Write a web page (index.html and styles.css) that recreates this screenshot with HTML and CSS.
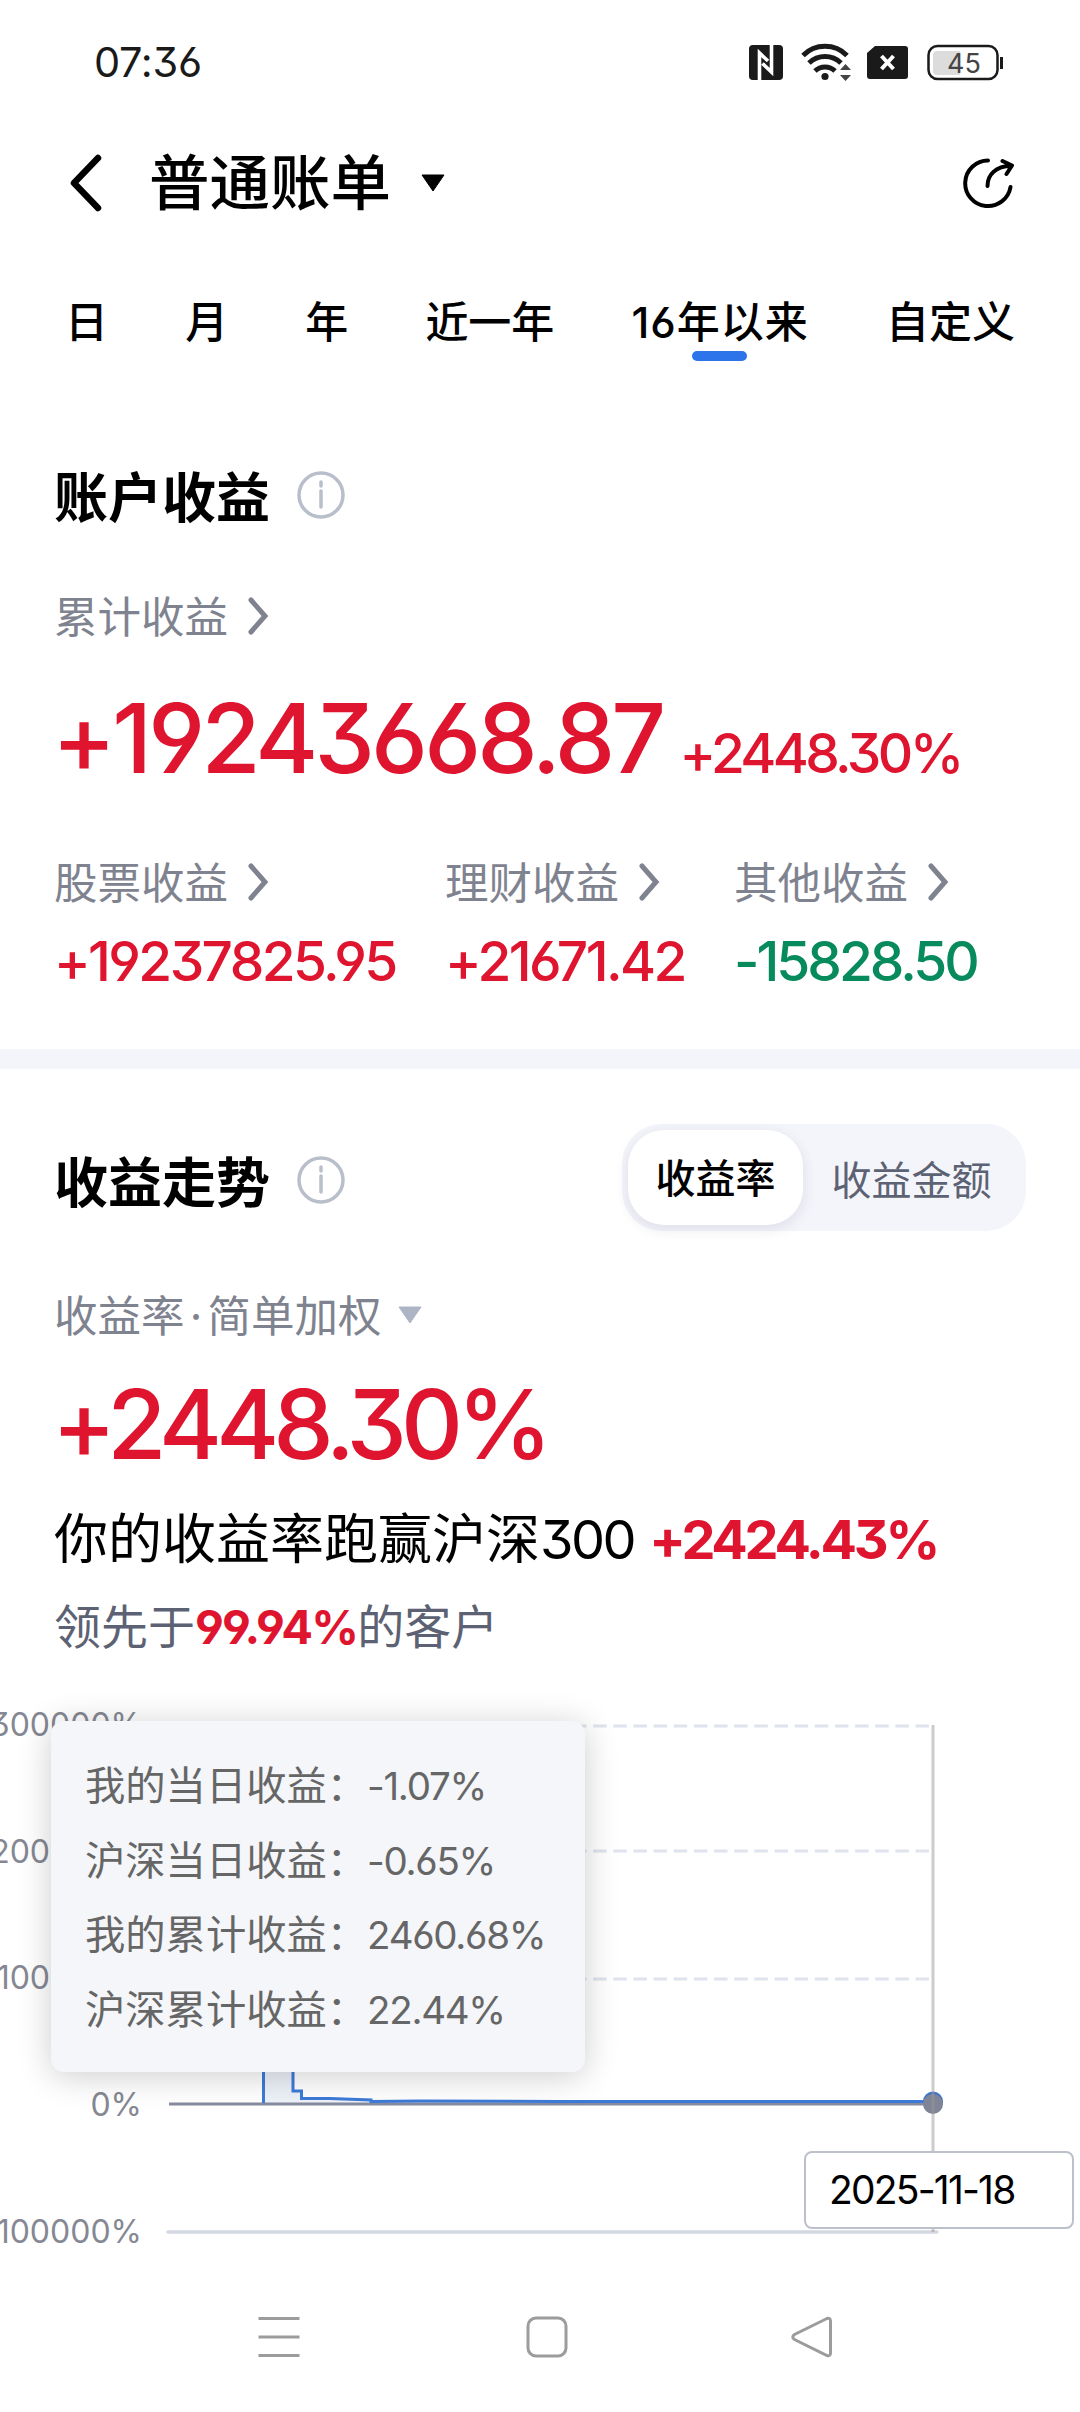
FILE: index.html
```html
<!DOCTYPE html>
<html lang="zh-CN">
<head>
  <meta charset="UTF-8">
  <meta name="viewport" content="width=device-width, initial-scale=1.0">
  <title>普通账单</title>
  <link rel="stylesheet" href="styles.css">
</head>

<body>
  <div class="status-bar">
    <span class="time">07:36</span>
    <svg class="status-icons" width="256" height="42" viewBox="0 0 256 42">
      <!-- nfc -->
      <rect x="1" y="4" width="34" height="35" rx="4" fill="#1a1a1a"/>
      <path d="M11.5 39V12L20 20M23.500 4V31L14.500 22.500" fill="none" stroke="#fff" stroke-width="3.600"/>
      <!-- wifi -->
      <g fill="none" stroke="#1a1a1a" stroke-width="5">
        <path d="M55 14.500A31 31 0 0 1 99 14.500"/>
        <path d="M61 22A23 23 0 0 1 93 22"/>
        <path d="M67 30A14.500 14.500 0 0 1 87 30"/>
      </g>
      <circle cx="77" cy="35.500" r="3.600" fill="#1a1a1a"/>
      <path d="M92 29L97.500 23L103 29zM92 34L97.500 40L103 34z" fill="#444"/>
      <!-- sim -->
      <path d="M127 5H157Q160 5 160 8V35Q160 38 157 38H122Q119 38 119 35V12z" fill="#1a1a1a"/>
      <path d="M133.500 15L145.500 28M145.500 15L133.500 28" stroke="#fff" stroke-width="4"/>
      <!-- battery -->
      <rect x="180.500" y="5" width="69" height="33" rx="9" fill="#fff" stroke="#1a1a1a" stroke-width="2.500"/>
      <path d="M189 10H212V34H189Q185 34 185 30V14Q185 10 189 10z" fill="#dcdcdc"/>
      <path d="M253.500 16V28" stroke="#1a1a1a" stroke-width="3"/>
      <text class="battery-text" x="216" y="32" text-anchor="middle">45</text>
    </svg>
  </div>

  <div class="header">
    <svg class="back" width="40" height="60" viewBox="0 0 40 60">
      <path d="M32 5L8 30L32 55" fill="none" stroke="#000" stroke-width="6.500" stroke-linecap="round" stroke-linejoin="round"/>
    </svg>
    <h1>普通账单</h1>
    <svg class="caret" width="26" height="18" viewBox="0 0 26 18">
      <path d="M2 1H24L13 17z" fill="#000" stroke="#000" stroke-linejoin="round"/>
    </svg>
    <svg class="share" width="52" height="52" viewBox="0 0 52 52">
      <g fill="none" stroke="#000" stroke-width="4" stroke-linecap="round" stroke-linejoin="round">
        <path d="M26 3.500A22.800 22.800 0 1 0 48.500 30"/>
        <path d="M25.500 29C25.500 17 34 9.500 49 8.800M40.500 4L50 8.500L44.500 17"/>
      </g>
    </svg>
  </div>

  <div class="tabs">
    <span>日</span>
    <span>月</span>
    <span>年</span>
    <span>近一年</span>
    <span class="active">16年以来</span>
    <span>自定义</span>
  </div>

  <div class="account">
    <div class="title-row">
      <h2>账户收益</h2>
      <svg class="info" width="48" height="48" viewBox="0 0 48 48">
        <circle cx="24" cy="24" r="22" fill="none" stroke="#b9becb" stroke-width="3.500"/>
        <path d="M24 20V36M24 11V15" stroke="#b9becb" stroke-width="3.500" stroke-linecap="round"/>
      </svg>
    </div>
    <div class="label total-label">累计收益
      <svg width="22" height="38" viewBox="0 0 22 38"><path d="M4 3L18 19L4 35"/></svg>
    </div>
    <div class="total">
      <span class="big">+19243668.87</span>
      <span class="rate">+2448.30%</span>
    </div>
    <div class="columns">
      <div>
        <div class="label">股票收益
          <svg width="22" height="38" viewBox="0 0 22 38"><path d="M4 3L18 19L4 35"/></svg>
        </div>
        <div class="value">+19237825.95</div>
      </div>
      <div>
        <div class="label">理财收益
          <svg width="22" height="38" viewBox="0 0 22 38"><path d="M4 3L18 19L4 35"/></svg>
        </div>
        <div class="value">+21671.42</div>
      </div>
      <div>
        <div class="label">其他收益
          <svg width="22" height="38" viewBox="0 0 22 38"><path d="M4 3L18 19L4 35"/></svg>
        </div>
        <div class="value down">-15828.50</div>
      </div>
    </div>
  </div>

  <div class="trend">
    <div class="trend-head">
      <div class="title-row">
        <h2>收益走势</h2>
        <svg class="info" width="48" height="48" viewBox="0 0 48 48">
          <circle cx="24" cy="24" r="22" fill="none" stroke="#b9becb" stroke-width="3.500"/>
          <path d="M24 20V36M24 11V15" stroke="#b9becb" stroke-width="3.500" stroke-linecap="round"/>
        </svg>
      </div>
      <div class="switch">
        <span class="on">收益率</span>
        <span>收益金额</span>
      </div>
    </div>
    <div class="method">
      <span>收益率</span><span class="dot">·</span><span>简单加权</span>
      <svg width="26" height="18" viewBox="0 0 26 18">
        <path d="M2 1H24L13 17z" fill="#adb5c5" stroke="#adb5c5" stroke-linejoin="round"/>
      </svg>
    </div>
    <div class="big">+2448.30%</div>
    <div class="compare">你的收益率跑赢沪深<span class="index">300</span> <b>+2424.43%</b></div>
    <div class="rank">领先于<b>99.94%</b>的客户</div>
  </div>

  <div class="chart">
    <svg width="1080" height="560" viewBox="0 0 1080 560">
      <g class="axis-text" text-anchor="end">
        <text x="142" y="35.500">300000%</text>
        <text x="142" y="162.500">200000%</text>
        <text x="142" y="289">100000%</text>
        <text x="142" y="416">0%</text>
        <text x="142" y="543">-100000%</text>
      </g>
      <g stroke="#dfe3ee" stroke-width="3" stroke-dasharray="13.500 6.650">
        <path d="M170 26H932M170 151H932M170 279H932"/>
      </g>
      <path d="M168 532H937" stroke="#d3d7df" stroke-width="3.500" stroke-linecap="round"/>
      <path d="M263 404V360H293V391L302 392V398L372 400L932 402V404z" fill="#edf1f8"/>
      <path d="M169 404H932" stroke="#868b9d" stroke-width="3"/>
      <path d="M263.500 403V360H293V391H301.500V398.500L330 398.500L371 400V401.500L420 401L560 401.500L932 401.500" fill="none" stroke="#3c7bd8" stroke-width="3"/>
      <circle cx="933" cy="401.500" r="10" fill="#3f74c9"/>
      <circle cx="933" cy="404" r="10" fill="#7f8596"/>
      <path d="M933 25V532" stroke="#999" stroke-opacity=".5" stroke-width="3"/>
    </svg>
    <div class="tooltip">
      <p>我的当日收益：<span>-1.07%</span></p>
      <p>沪深当日收益：<span>-0.65%</span></p>
      <p>我的累计收益：<span>2460.68%</span></p>
      <p>沪深累计收益：<span>22.44%</span></p>
    </div>
    <div class="date-tag">2025-11-18</div>
  </div>

  <div class="nav-bar">
    <svg width="44" height="44" viewBox="0 0 44 44"><path d="M1.500 3.500H42.500M1.500 22H42.500M1.500 40.500H42.500"/></svg>
    <svg width="44" height="44" viewBox="0 0 44 44"><rect x="4" y="3" width="38" height="38" rx="8"/></svg>
    <svg width="44" height="44" viewBox="0 0 44 44"><path d="M37 3.500L4.500 19.500Q1 22 4.500 24.500L37 40.500Q40.500 41.500 40.500 38V6Q40.500 2.500 37 3.500z"/></svg>
  </div>
</body>
</html>
```
FILE: styles.css
```css
* {
  margin: 0;
  padding: 0;
  box-sizing: border-box;
}

body {
  width: 1080px;
  height: 2412px;
  overflow: hidden;
  background: #fff;
  color: #000;
  font-family: Inter, "Noto Sans CJK SC", sans-serif;
  font-feature-settings: "cv03", "cv04", "cv09";
}

svg {
  display: block;
  flex: none;
}

/* status bar */
.status-bar {
  display: flex;
  justify-content: space-between;
  align-items: center;
  height: 124px;
  padding: 0 76px 0 94px;
}

.time {
  font-size: 41.500px;
  letter-spacing: -0.300px;
  color: #1a1a1a;
}

.battery-text {
  font-size: 27px;
  fill: #444;
}

/* page header */
.header {
  display: flex;
  align-items: center;
  height: 118px;
  padding: 0 66px;
}

.header h1 {
  margin-left: 43px;
  font-size: 60.500px;
  font-weight: 500;
  line-height: 80px;
}

.caret {
  margin-left: 29px;
}

.share {
  margin-left: auto;
}

.tabs {
  display: flex;
  justify-content: space-between;
  align-items: center;
  height: 160px;
  padding: 0 65px;
  font-size: 43px;
  font-weight: 500;
  line-height: 60px;
}

.tabs .active {
  position: relative;
  letter-spacing: 1px;
}

.tabs .active::after {
  content: "";
  position: absolute;
  left: 50%;
  bottom: -9px;
  width: 55px;
  height: 10px;
  margin-left: -28px;
  border-radius: 5px;
  background: #2d74ea;
}

/* account income */
.account {
  height: 667px;
  padding: 57px 54px 0;
  border-bottom: 20px solid #f4f5fa;
}

.title-row {
  display: flex;
  align-items: center;
  line-height: 80px;
}

h2 {
  font-size: 54px;
  font-weight: 700;
}

.info {
  margin-left: 27px;
  margin-top: -8px;
}

.label {
  display: flex;
  align-items: center;
  gap: 19px;
  font-size: 43.500px;
  line-height: 60px;
  color: #7f8390;
}

.label svg {
  margin-top: -2px;
}

.label svg path {
  fill: none;
  stroke: #7f8390;
  stroke-width: 5;
  stroke-linecap: round;
}

.total-label {
  margin-top: 48px;
}

.total {
  display: flex;
  align-items: baseline;
  margin-top: 41px;
}

.big {
  margin-left: -2px;
  font-size: 96px;
  font-weight: 500;
  line-height: 100px;
  letter-spacing: -3.800px;
  color: #df142f;
}

.rate {
  margin-left: 17px;
  font-size: 55px;
  font-weight: 500;
  line-height: 60px;
  letter-spacing: -3.600px;
  color: #df142f;
}

.columns {
  display: grid;
  grid-template-columns: 391px 289px 1fr;
  margin-top: 65px;
}

.value {
  margin-top: 13px;
  font-size: 55px;
  font-weight: 500;
  line-height: 70px;
  letter-spacing: -2.600px;
  color: #df142f;
}

.value.down {
  letter-spacing: -3px;
  color: #078a5c;
}

/* income trend */
.trend {
  padding: 55px 54px 0;
}

.trend-head {
  display: flex;
  justify-content: space-between;
  align-items: center;
}

.trend-head .title-row {
  padding-top: 12px;
}

.switch {
  display: flex;
  align-items: center;
  width: 404px;
  height: 107px;
  padding: 6px;
  border-radius: 40px;
  background: #f4f5fa;
  font-size: 40px;
  color: #5c6273;
}

.switch span {
  flex: 1;
  text-align: center;
}

.switch .on {
  flex: none;
  width: 175px;
  height: 95px;
  line-height: 97px;
  border-radius: 36px;
  background: #fff;
  box-shadow: 0 4px 14px rgba(60, 60, 110, 0.12);
  font-weight: 500;
  color: #000;
}

.method {
  display: flex;
  align-items: center;
  margin-top: 54px;
  font-size: 43.500px;
  line-height: 62px;
  color: #7f8390;
}

.method .dot {
  width: 23px;
  text-align: center;
}

.method svg {
  margin-left: 15px;
  margin-top: -2px;
}

.trend .big {
  margin-top: 27px;
  letter-spacing: -5.900px;
}

.compare {
  margin-top: 31px;
  font-size: 54px;
  line-height: 70px;
  white-space: nowrap;
}

.compare .index {
  letter-spacing: -2.500px;
}

.compare b {
  letter-spacing: -3.300px;
  color: #df142f;
}

.rank {
  margin-top: 22px;
  font-size: 47px;
  line-height: 60px;
  color: #5c6273;
}

.rank b {
  letter-spacing: -1.800px;
  color: #df142f;
}

/* chart */
.chart {
  position: relative;
  height: 560px;
  margin-top: 43px;
}

.axis-text {
  font-size: 32px;
  fill: #858893;
}

.tooltip {
  position: absolute;
  left: 51px;
  top: 21px;
  width: 534px;
  height: 351px;
  padding: 28px 34px;
  border-radius: 13px;
  background: #f4f6fa;
  box-shadow: 0 4px 34px rgba(0, 0, 0, 0.2);
  font-size: 40.300px;
  line-height: 74.500px;
  color: #666;
  white-space: nowrap;
}

.tooltip span {
  font-size: 38.500px;
  letter-spacing: -1.300px;
}

.date-tag {
  position: absolute;
  left: 804px;
  top: 451px;
  width: 270px;
  height: 78px;
  padding-left: 23px;
  border: 2px solid #bcc0ca;
  border-radius: 8px;
  background: #fff;
  font-size: 39px;
  line-height: 74px;
  letter-spacing: -1.800px;
}

/* android navigation */
.nav-bar {
  display: flex;
  justify-content: space-between;
  align-items: center;
  height: 152px;
  padding: 2px 246px 0 257px;
}

.nav-bar svg {
  fill: none;
  stroke: #9c9c9c;
  stroke-width: 3;
}
```
